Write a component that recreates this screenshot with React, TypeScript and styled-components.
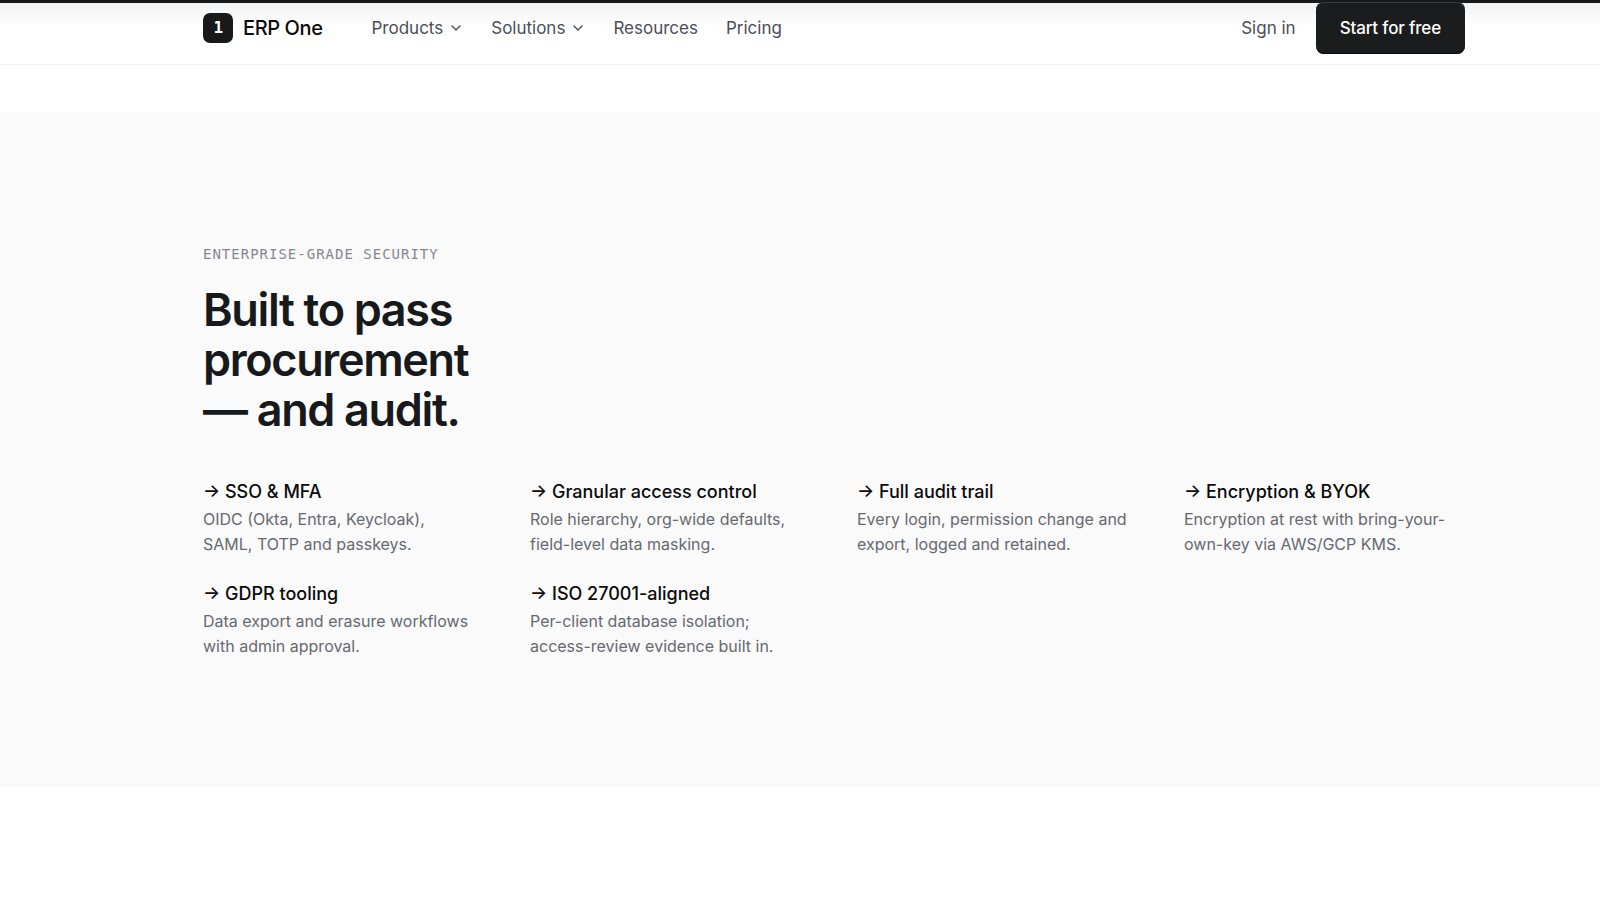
import React from "react";
import styled, { createGlobalStyle } from "styled-components";

const Global = createGlobalStyle`
  * { box-sizing: border-box; }
  body { margin: 0; background: #fff; color: #18191a; font-family: Inter, "Liberation Sans", sans-serif; -webkit-font-smoothing: antialiased; }
  h2, h3, p, ul { margin: 0; padding: 0; }
`;
const Header = styled.header`
  height: 65px;
  padding-left: 68px;
  border-top: 3px solid #18191a;
  border-bottom: 1px solid #f1f1f2;
  background: linear-gradient(#f3f3f3, #fff 24px);
`;
const Container = styled.div`
  max-width: 1262px;
  margin: 0 auto;
`;
const Bar = styled(Container)`
  display: flex;
  align-items: center;
  height: 49px;
`;
const Brand = styled.a`
  display: flex;
  align-items: center;
  gap: 10px;
  color: #0b0b0c;
  font-size: 20px;
  font-weight: 500;
  letter-spacing: -0.02em;
  text-decoration: none;
`;
const Mark = styled.span`
  display: grid;
  place-items: center;
  width: 30px;
  height: 30px;
  border-radius: 7px;
  background: #18191a;
  color: #fff;
  font-family: "DejaVu Sans Mono", monospace;
  font-size: 16px;
  font-weight: 700;
`;
const Nav = styled.nav`
  display: flex;
  gap: 28px;
  margin-left: 49px;
  flex: 1;
`;
const navText = `
  display: flex;
  align-items: center;
  gap: 6px;
  padding: 0;
  border: 0;
  background: none;
  color: #4b4e57;
  font-family: inherit;
  font-size: 17px;
  line-height: 24px;
  text-decoration: none;
`;
const NavLink = styled.a`${navText}`;
const NavButton = styled.button`${navText}`;
const Actions = styled.div`
  display: flex;
  align-items: center;
  gap: 20px;
`;
const Start = styled.button`
  height: 52px;
  padding: 0 24px;
  border: 0;
  border-radius: 8px;
  background: #1b1c1d;
  box-shadow: inset 0 1px #3a3b3c, inset 0 -1px #0c0c0d;
  color: #fff;
  font-family: inherit;
  font-size: 17px;
  font-weight: 500;
  letter-spacing: -0.01em;
`;
const Security = styled.section`
  margin-top: 47px;
  padding: 132px 0 128px 68px;
  background: #fafafa;
`;
const Eyebrow = styled.p`
  color: #85878f;
  font-family: "DejaVu Sans Mono", monospace;
  font-size: 14px;
  line-height: 20px;
  letter-spacing: 1px;
  text-transform: uppercase;
`;
const Title = styled.h2`
  max-width: 290px;
  margin: 21px 0 42px;
  font-size: 45px;
  font-weight: 600;
  line-height: 50px;
  letter-spacing: -0.03em;
`;
const Grid = styled.ul`
  display: grid;
  grid-template-columns: repeat(4, 1fr);
  gap: 22px 46px;
  list-style: none;
`;
const Name = styled.h3`
  color: #0b0b0c;
  font-size: 18px;
  font-weight: 500;
  line-height: 30px;
`;
const Text = styled.p`
  max-width: 275px;
  color: #666970;
  font-size: 16px;
  line-height: 25px;
`;
const Chevron = () => (
  <svg width="14" height="14" viewBox="0 0 14 14" fill="none" stroke="currentColor" strokeWidth="1.4" strokeLinecap="round" strokeLinejoin="round"><path d="M3 5l4 4 4-4" /></svg>
);
const features = [
  ["SSO & MFA", "OIDC (Okta, Entra, Keycloak), SAML, TOTP and passkeys."],
  ["Granular access control", "Role hierarchy, org-wide defaults, field-level data masking."],
  ["Full audit trail", "Every login, permission change and export, logged and retained."],
  ["Encryption & BYOK", "Encryption at rest with bring-your-own-key via AWS/GCP KMS."],
  ["GDPR tooling", "Data export and erasure workflows with admin approval."],
  ["ISO 27001-aligned", "Per-client database isolation; access-review evidence built in."],
];
export default function App() {
  return (
    <>
      <Global />
      <Header>
        <Bar>
          <Brand href="#"><Mark>1</Mark>ERP One</Brand>
          <Nav>
            <NavButton type="button">Products<Chevron /></NavButton>
            <NavButton type="button">Solutions<Chevron /></NavButton>
            <NavLink href="#">Resources</NavLink>
            <NavLink href="#">Pricing</NavLink>
          </Nav>
          <Actions>
            <NavLink href="#">Sign in</NavLink>
            <Start type="button">Start for free</Start>
          </Actions>
        </Bar>
      </Header>
      <Security>
        <Container>
          <Eyebrow>Enterprise-grade security</Eyebrow>
          <Title>Built to pass procurement — and audit.</Title>
          <Grid>
            {features.map(([name, text]) => (
              <li key={name}><Name>→ {name}</Name><Text>{text}</Text></li>
            ))}
          </Grid>
        </Container>
      </Security>
    </>
  );
}
